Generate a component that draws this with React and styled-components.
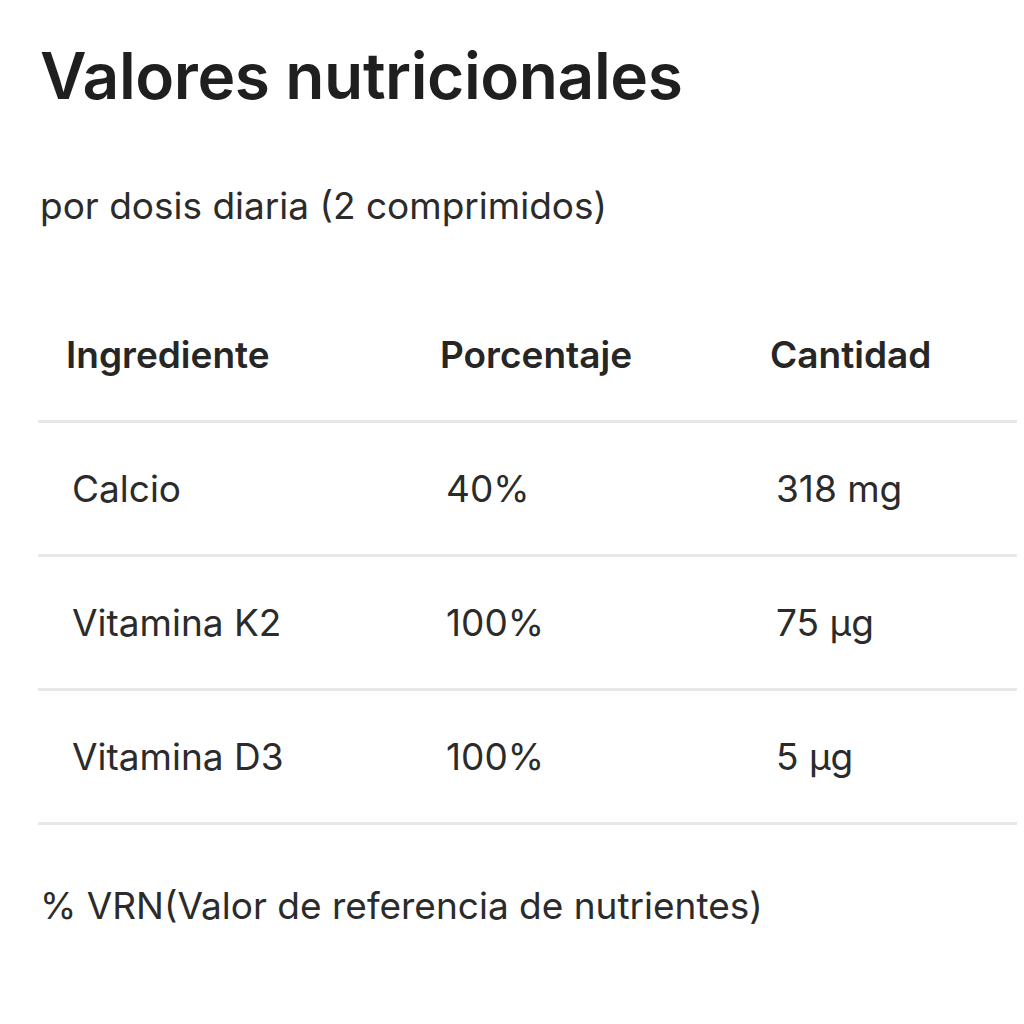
import React from 'react';
import styled, { createGlobalStyle } from 'styled-components';

const GlobalStyle = createGlobalStyle`
  body {
    margin: 0;
    background: #ffffff;
    font-family: Inter, "Noto Sans", sans-serif;
    color: #262626;
  }
`;

const Page = styled.div`
  padding: 36px 7px 0 38px;
`;

const Title = styled.h1`
  margin: 0 0 0 2px;
  font-size: 64px;
  font-weight: 600;
  line-height: 80px;
  letter-spacing: -0.4px;
  color: #1f1f1f;
`;

const Subtitle = styled.p`
  margin: 68px 0 0 2px;
  font-size: 37px;
  line-height: 44px;
  color: #2b2b2b;
`;

const Table = styled.table`
  margin-top: 62px;
  width: 100%;
  border-collapse: collapse;
`;

const HeadCell = styled.th`
  text-align: left;
  font-size: 37px;
  font-weight: 600;
  line-height: 44px;
  color: #262626;
  height: 130px;
  padding: 0 0 0 28px;
  border-bottom: 3px solid #e8e8e8;
  vertical-align: middle;
`;

const Cell = styled.td`
  font-size: 37px;
  line-height: 44px;
  color: #2b2b2b;
  height: 131px;
  padding: 0 0 0 34px;
  border-bottom: 3px solid #e8e8e8;
  vertical-align: middle;
`;

const Note = styled.p`
  margin: 59px 0 0 2px;
  font-size: 37px;
  line-height: 44px;
  color: #2b2b2b;
`;

const rows = [
  ['Calcio', '40%', '318 mg'],
  ['Vitamina K2', '100%', '75 µg'],
  ['Vitamina D3', '100%', '5 µg'],
];

export default function App() {
  return (
    <Page>
      <GlobalStyle />
      <Title>Valores nutricionales</Title>
      <Subtitle>por dosis diaria (2 comprimidos)</Subtitle>
      <Table>
        <colgroup>
          <col style={{ width: 374 }} />
          <col style={{ width: 330 }} />
          <col />
        </colgroup>
        <thead>
          <tr>
            <HeadCell>Ingrediente</HeadCell>
            <HeadCell>Porcentaje</HeadCell>
            <HeadCell>Cantidad</HeadCell>
          </tr>
        </thead>
        <tbody>
          {rows.map((r) => (
            <tr key={r[0]}>
              <Cell>{r[0]}</Cell>
              <Cell>{r[1]}</Cell>
              <Cell>{r[2]}</Cell>
            </tr>
          ))}
        </tbody>
      </Table>
      <Note>% VRN(Valor de referencia de nutrientes)</Note>
    </Page>
  );
}
